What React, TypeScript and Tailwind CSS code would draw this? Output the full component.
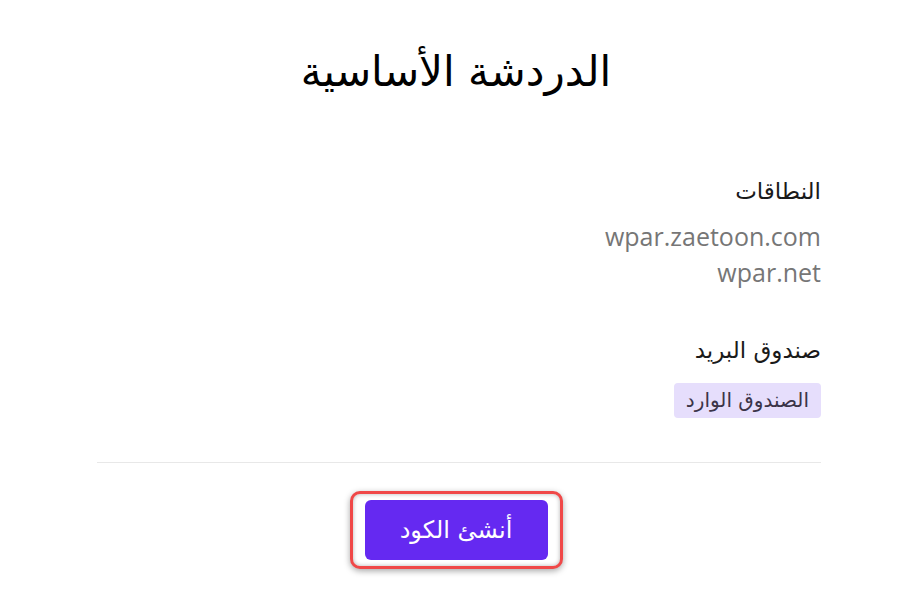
const arabic = { fontFamily: '"DejaVu Sans", sans-serif' };
const latin = { fontFamily: '"Open Sans", sans-serif' };

export default function App() {
  const domains = ['wpar.zaetoon.com', 'wpar.net'];

  return (
    <div dir="rtl" className="min-h-screen bg-white" style={arabic}>
      {/* Title */}
      <div className="pt-[42px] text-center">
        <h1 className="text-[42px] leading-[60px] text-black">الدردشة الأساسية</h1>
      </div>

      {/* Details */}
      <div className="flex justify-center pl-[6px]">
        <div className="w-[724px] pt-[74px]">
          <h2 className="text-[23px] leading-[30px] text-[#1a1a1a]">النطاقات</h2>
          <div className="mt-[12px]">
            {domains.map((d) => (
              <p
                key={d}
                dir="ltr"
                className="text-right text-[25px] leading-[36px] text-[#767676]"
                style={latin}
              >
                {d}
              </p>
            ))}
          </div>

          <h2 className="mt-[45px] text-[23px] leading-[30px] text-[#1a1a1a]">صندوق البريد</h2>
          <div className="mt-[18px] flex">
            <span className="h-[35px] rounded bg-[#e6defc] px-[12px] text-[20px] leading-[35px] text-[#3b3448]">
              الصندوق الوارد
            </span>
          </div>

          <div className="mt-[44px] border-t border-[#e8e8e8]" />
        </div>
      </div>

      {/* Action */}
      <div className="flex justify-center pt-[28px]">
        <div className="rounded-[10px] border-[3px] border-[#f04848] bg-white px-[12px] py-[6px] shadow-[0_2px_6px_rgba(0,0,0,0.35),inset_0_0_4px_rgba(0,0,0,0.3)]">
          <button className="h-[60px] w-[183px] rounded-md bg-[#6529f1] text-[24px] text-white">
            أنشئ الكود
          </button>
        </div>
      </div>
    </div>
  );
}
